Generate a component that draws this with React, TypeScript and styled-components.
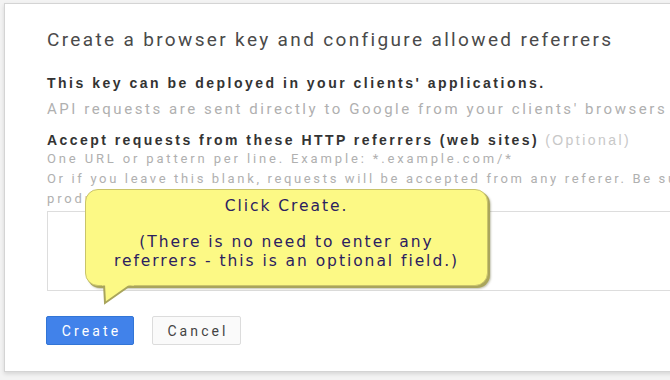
import { createGlobalStyle, styled } from 'styled-components'

const GlobalStyle = createGlobalStyle`
  html, body {
    margin: 0;
    padding: 0;
    background: #f3f3f3;
    overflow: hidden;
  }
`

const Page = styled.div`
  width: 670px;
  height: 380px;
  overflow: hidden;
  background: #f3f3f3;
  padding: 3px 0 0 4px;
  box-sizing: border-box;
`

const Dialog = styled.div`
  width: 720px;
  height: 369px;
  box-sizing: border-box;
  background: #fff;
  border: 1px solid #d4d4d4;
  box-shadow: 0 2px 4px rgba(0, 0, 0, 0.12);
  padding: 24px 0 0 42px;
  font-family: Roboto, 'Liberation Sans', Arial, sans-serif;
  color: #444;
`

const Title = styled.h1`
  margin: 0 0 22px;
  font-size: 19px;
  font-weight: 400;
  line-height: 24px;
  letter-spacing: 2.35px;
  color: #4a4a4a;
  white-space: nowrap;
`

const Strong = styled.div<{ $spacing?: number }>`
  font-family: 'Liberation Sans', Arial, sans-serif;
  font-size: 14px;
  font-weight: 700;
  line-height: 18px;
  letter-spacing: ${(p) => p.$spacing ?? 2.5}px;
  color: #333;
  white-space: nowrap;
`

const Muted = styled.div<{ $size?: number; $spacing?: number }>`
  font-size: ${(p) => p.$size ?? 13}px;
  line-height: 20px;
  letter-spacing: ${(p) => p.$spacing ?? 2.85}px;
  color: #b0b0b0;
  white-space: nowrap;
`

const Optional = styled.span`
  font-weight: 400;
  color: #c8c8c8;
  margin-left: 6px;
`

const Block = styled.div<{ $gap: number }>`
  margin-top: ${(p) => p.$gap}px;
`

const Field = styled.div`
  position: relative;
`

const TextArea = styled.div`
  height: 80px;
  margin-top: 2px;
  border: 1px solid #ddd;
  border-right: none;
  box-sizing: border-box;
`

const Callout = styled.div`
  position: absolute;
  left: 38px;
  top: 0;
  width: 403px;
  height: 97px;
  box-sizing: border-box;
  background: #fcf985;
  border: 1px solid #c9c46a;
  border-radius: 13px;
  box-shadow: 2px 2px 0 #a9a55c, 3px 3px 2px rgba(90, 90, 40, 0.35);
  font-family: 'DejaVu Sans', Verdana, sans-serif;
  font-size: 15.5px;
  line-height: 19px;
  letter-spacing: 1.95px;
  color: #2b2060;
  text-align: center;
  padding-top: 7px;
`

const CalloutLine = styled.div<{ $gap?: number }>`
  margin-top: ${(p) => p.$gap ?? 0}px;
  white-space: nowrap;
`

const Tail = styled.svg`
  position: absolute;
  left: 15px;
  top: 94px;
`

const Actions = styled.div`
  display: flex;
  gap: 18px;
  margin: 25px 0 0 -1px;
`

const Button = styled.button<{ $primary?: boolean }>`
  height: 29px;
  width: ${(p) => (p.$primary ? 88 : 89)}px;
  box-sizing: border-box;
  border-radius: 2px;
  font-family: Roboto, 'Liberation Sans', Arial, sans-serif;
  font-size: 14px;
  letter-spacing: 3.1px;
  padding: 0 0 0 3px;
  border: 1px solid ${(p) => (p.$primary ? '#3275d6' : '#dcdcdc')};
  background: ${(p) => (p.$primary ? '#4182ea' : '#fafafa')};
  color: ${(p) => (p.$primary ? '#fff' : '#444')};
`

export default function App() {
  return (
    <Page>
      <GlobalStyle />
      <Dialog>
        <Title>Create a browser key and configure allowed referrers</Title>
        <Strong>This key can be deployed in your clients' applications.</Strong>
        <Block $gap={7}>
          <Muted $size={15} $spacing={2.55}>
            API requests are sent directly to Google from your clients' browsers
          </Muted>
        </Block>
        <Block $gap={12}>
          <Strong $spacing={2.45}>
            Accept requests from these HTTP referrers (web sites)
            <Optional>(Optional)</Optional>
          </Strong>
          <Muted>One URL or pattern per line. Example: *.example.com/*</Muted>
          <Muted $spacing={2.65}>
            Or if you leave this blank, requests will be accepted from any referer. Be sure to add referrers before using this key in
          </Muted>
          <Field>
            <Muted>production.</Muted>
            <TextArea />
            <Callout>
              <CalloutLine>Click Create.</CalloutLine>
              <CalloutLine $gap={17}>(There is no need to enter any</CalloutLine>
              <CalloutLine>referrers - this is an optional field.)</CalloutLine>
              <Tail width="34" height="22" viewBox="0 0 34 22">
                <path d="M3 0 L4 19 L31 0 Z" fill="#fcf985" />
                <path d="M3 0 L4 19 L31 0" fill="none" stroke="#a9a55c" strokeWidth="2" />
                <path d="M1 0 L33 0" stroke="#fcf985" strokeWidth="3" />
              </Tail>
            </Callout>
          </Field>
        </Block>
        <Actions>
          <Button $primary>Create</Button>
          <Button>Cancel</Button>
        </Actions>
      </Dialog>
    </Page>
  )
}
